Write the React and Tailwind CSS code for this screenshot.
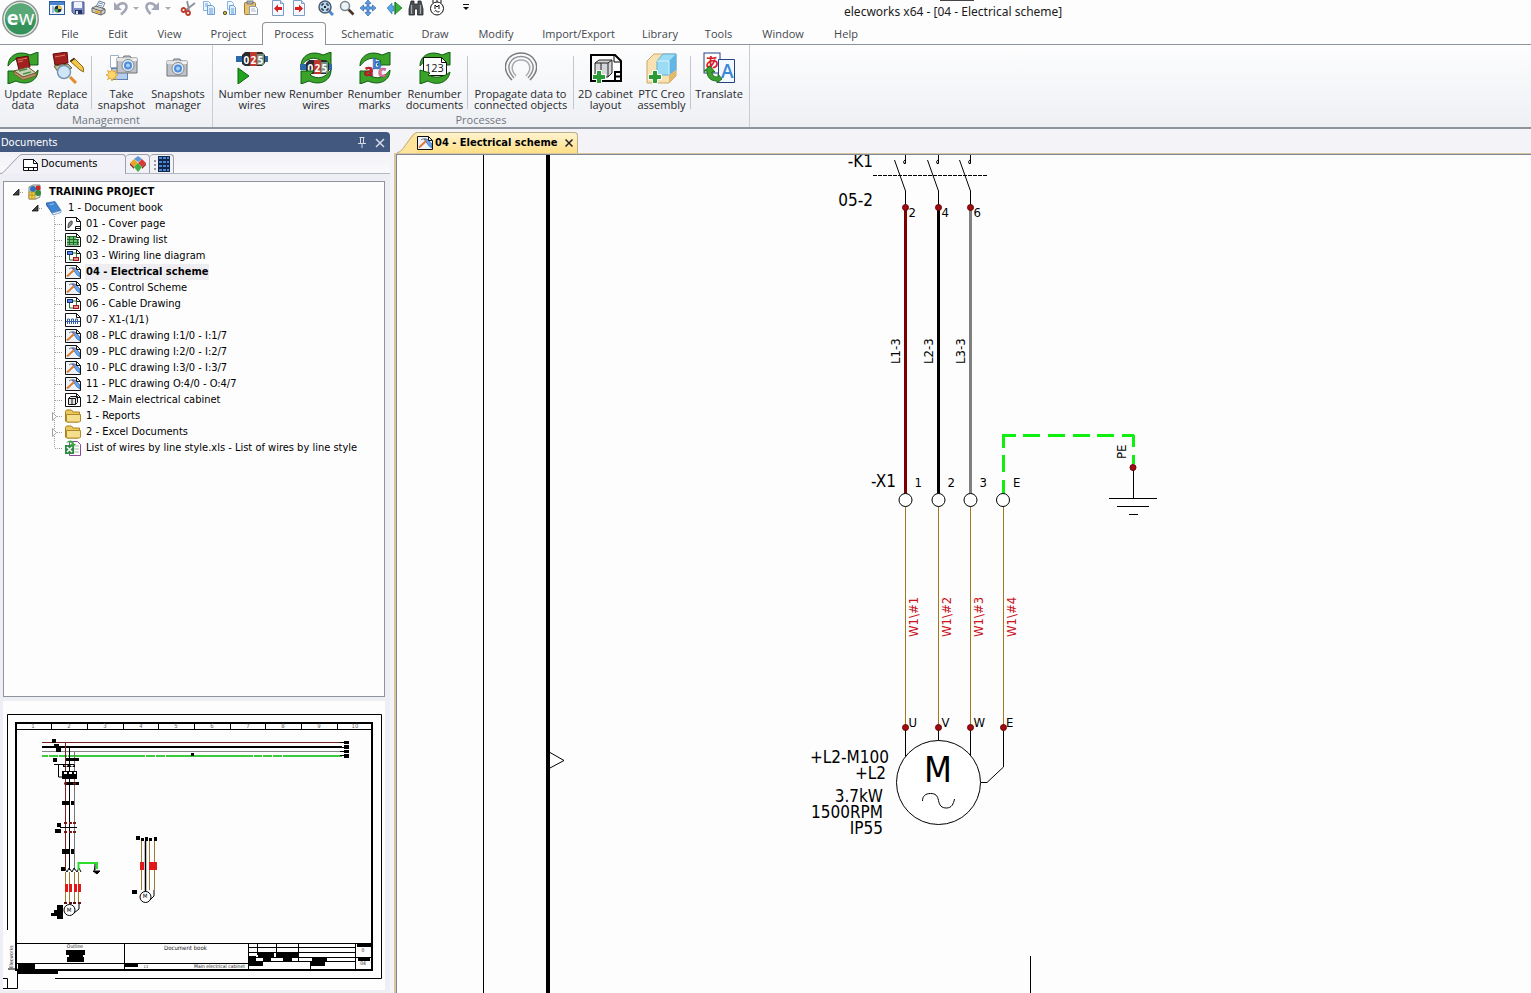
import React from 'react';

/* ---------- quick access icons (16px) ---------- */

const Svg16 = ({ children }) => (
  <svg viewBox="0 0 16 16" className="h-4 w-4 shrink-0" aria-hidden="true">{children}</svg>
);

const HomeIcon = () => (
  <Svg16>
    <rect x="0.5" y="1.5" width="15" height="13" fill="#eef4fc" stroke="#2d5c9e" />
    <rect x="1" y="2" width="14" height="3" fill="#4a84cc" />
    <rect x="3" y="6" width="2" height="7" fill="#9dc0ea" />
    <circle cx="9" cy="9" r="3.5" fill="#1d2f3f" />
    <path d="M9 9V5.5A3.5 3.5 0 0 1 12.5 9z" fill="#f2c43a" />
    <path d="M9 9v3.5A3.5 3.5 0 0 1 5.5 9z" fill="#3fa046" />
  </Svg16>
);
const SaveIcon = () => (
  <Svg16>
    <path d="M2 2h12v12H4l-2-2z" fill="#7e8cc4" stroke="#46588f" />
    <rect x="4" y="2" width="8" height="6" fill="#eef2fa" />
    <rect x="5" y="10" width="7" height="4" fill="#24365f" />
    <rect x="6" y="11" width="2" height="3" fill="#dce4f2" />
  </Svg16>
);
const PrintIcon = () => (
  <Svg16>
    <path d="M5 7l3-6 6 2-3 6z" fill="#fff" stroke="#7a7f88" />
    <path d="M1 8l4-2 9 3v4l-4 2-9-3z" fill="#d0cfc6" stroke="#66686b" />
    <path d="M1 8l9 3v4M10 11l4-2" fill="none" stroke="#66686b" />
    <path d="M4 11l5 2" stroke="#e6a92c" strokeWidth="2" />
    <path d="M8 3l4 1M7 5l4 1" stroke="#5c8dcc" />
  </Svg16>
);
const UndoIcon = () => (
  <Svg16>
    <path d="M4 7C7 2 14 2 13.500 7.500c-.5 3-3 5-5.500 7" fill="none" stroke="#a3a6b6" strokeWidth="2.600" />
    <path d="M1 2v8h8z" fill="#a3a6b6" />
  </Svg16>
);
const RedoIcon = () => (
  <Svg16>
    <path d="M12 7C9 2 2 2 2.500 7.500c.5 3 2 4.500 4 6.500" fill="none" stroke="#a3a6b6" strokeWidth="2.600" />
    <path d="M15 2v8H7z" fill="#a3a6b6" />
  </Svg16>
);
const CutIcon = () => (
  <Svg16>
    <path d="M15 3L6 10M7 1l2 9" stroke="#8c9098" strokeWidth="1.800" />
    <circle cx="3.500" cy="10" r="2" fill="none" stroke="#c03a2b" strokeWidth="1.800" />
    <circle cx="8" cy="13" r="2" fill="none" stroke="#c03a2b" strokeWidth="1.800" />
  </Svg16>
);
const CopyIcon = () => (
  <Svg16>
    <path d="M2.500 1.500h5l2 2v7h-7z" fill="#f1f7ff" stroke="#85b3e3" />
    <path d="M6.500 5.500h5l2 2v7h-7z" fill="#e1eefc" stroke="#6a9fd8" />
    <path d="M8 9h4M8 11h4M8 13h4M4 4h3M4 6h2" stroke="#6a9fd8" />
  </Svg16>
);
const CopySpecialIcon = () => (
  <Svg16>
    <path d="M5.500 1.500h4l2 2v6h-6z" fill="#f1f7ff" stroke="#85b3e3" />
    <path d="M7.500 5.500h4l2 2v7h-6z" fill="#e1eefc" stroke="#6a9fd8" />
    <path d="M9 9h3M9 11h3M9 13h3" stroke="#6a9fd8" />
    <circle cx="3" cy="13" r="1.700" fill="#d4b02c" stroke="#333" strokeWidth=".8" />
  </Svg16>
);
const PasteIcon = () => (
  <Svg16>
    <rect x="1.500" y="2.500" width="11" height="12" rx="1" fill="#e8c372" stroke="#a37a2c" />
    <rect x="4" y="1" width="6" height="3" fill="#a9adb5" stroke="#6a6e76" strokeWidth=".8" />
    <path d="M6.500 6.500h6l2 2v6h-8z" fill="#fff" stroke="#8b9cb5" />
    <path d="M8 9h4M8 11h5" stroke="#a8b6ca" />
  </Svg16>
);
const PageArrowIcon = ({ right }) => (
  <Svg16>
    <path d="M2.500.5h8l3 3v12h-11z" fill="#f6faff" stroke="#7b9dc8" />
    <path d="M10.500.5v3h3" fill="#cddff4" stroke="#7b9dc8" />
    {right
      ? <path d="M12 8.500L8 4.500V7H4v3h4v2.500z" fill="#d81e1e" />
      : <path d="M4 8.500l4-4V7h4v3H8v2.500z" fill="#d81e1e" />}
  </Svg16>
);
const ZoomFitIcon = () => (
  <Svg16>
    <path d="M11 11l4 4" stroke="#4f8ad0" strokeWidth="3" />
    <circle cx="7" cy="7" r="6" fill="#b9d7f2" stroke="#4b5d72" strokeWidth="1.500" />
    <path d="M4 6V4h2M8 4h2v2M10 8v2H8M6 10H4V8" fill="none" stroke="#111" />
    <rect x="6" y="6" width="2" height="2" fill="#222" />
  </Svg16>
);
const ZoomIcon = () => (
  <Svg16>
    <path d="M9.500 9.500l5 5" stroke="#4a3428" strokeWidth="2.600" />
    <circle cx="6" cy="6" r="4.500" fill="#e9f2f7" stroke="#7c848c" strokeWidth="1.500" />
    <path d="M4 5l2-1.500" stroke="#fff" />
  </Svg16>
);
const MoveIcon = () => (
  <Svg16>
    <path d="M8 0l3 3.500H9V7h3.500V5L16 8l-3.500 3V9H9v3.500h2L8 16l-3-3.500h2V9H3.500v2L0 8l3.500-3v2H7V3.500H5z" fill="#5f9fe4" stroke="#2a62aa" strokeWidth=".7" />
  </Svg16>
);
const SyncIcon = () => (
  <Svg16>
    <path d="M0 8l5-5v3h2v5H5v3z" fill="#57a5e0" stroke="#2e72ad" strokeWidth=".6" />
    <path d="M8 2v13M8 2l7 6-7 6z" fill="#35b33c" stroke="#17711d" strokeWidth=".8" />
  </Svg16>
);
const FindIcon = () => (
  <Svg16>
    <path d="M3 1h3v3h4V1h3l2 8v6H9.500V9h-3v6H1V9z" fill="#4c5055" stroke="#232527" strokeWidth=".8" />
    <path d="M3.500 5v9M12.500 5v9" stroke="#a6abb0" strokeWidth="1.200" />
  </Svg16>
);
const MotorIcon = () => (
  <Svg16>
    <circle cx="8" cy="8.500" r="6.500" fill="#fff" stroke="#111" />
    <path d="M4 0v3M8 0v2M12 0v3" stroke="#111" />
    <path d="M6 9V5l2 2 2-2v4M5.500 11.500c1-1.500 2-1 2.500 0s1.500 1 2.500-.5" fill="none" stroke="#111" />
  </Svg16>
);
const Caret = ({ dark }) => (
  <svg viewBox="0 0 8 8" className="h-2 w-2" aria-hidden="true">
    {dark && <path d="M1 .5h6" stroke="#111" />}
    <path d="M1 3h6L4 6z" fill={dark ? '#111' : '#a9abb3'} />
  </svg>
);

const quickAccess = [
  { label: 'Home', icon: <HomeIcon />, box: 'w-[21px]' },
  { label: 'Save', icon: <SaveIcon />, box: 'w-[21px]' },
  { label: 'Print', icon: <PrintIcon />, box: 'w-[22px]' },
  { label: 'Undo', icon: <UndoIcon />, box: 'w-[21px]' },
  { label: 'Undo list', icon: <Caret />, box: 'w-[10px]' },
  { label: 'Redo', icon: <RedoIcon />, box: 'w-[22px]' },
  { label: 'Redo list', icon: <Caret />, box: 'w-[10px]' },
  { label: 'Cut', icon: <CutIcon />, box: 'ml-1 w-[21px]' },
  { label: 'Copy', icon: <CopyIcon />, box: 'w-[21px]' },
  { label: 'Copy special', icon: <CopySpecialIcon />, box: 'w-[21px]' },
  { label: 'Paste', icon: <PasteIcon />, box: 'w-[21px]' },
  { label: 'Previous drawing', icon: <PageArrowIcon />, box: 'ml-1.5 w-[21px]' },
  { label: 'Next drawing', icon: <PageArrowIcon right />, box: 'w-[21px]' },
  { label: 'Zoom extents', icon: <ZoomFitIcon />, box: 'ml-1.5 w-[21px]' },
  { label: 'Zoom', icon: <ZoomIcon />, box: 'w-[21px]' },
  { label: 'Pan', icon: <MoveIcon />, box: 'w-[21px]' },
  { label: 'Refresh', icon: <SyncIcon />, box: 'ml-1.5 w-[21px]' },
  { label: 'Find', icon: <FindIcon />, box: 'w-[21px]' },
  { label: 'Symbol', icon: <MotorIcon />, box: 'w-[21px]' },
  { label: 'Customize', icon: <Caret dark />, box: 'ml-2 w-[21px]' },
];

const menus = [
  { label: 'File', box: 'w-[44px]' },
  { label: 'Edit', box: 'w-[52px]' },
  { label: 'View', box: 'w-[51px]' },
  { label: 'Project', box: 'w-[67px]' },
  { label: 'Process', box: 'w-[64px]', active: true },
  { label: 'Schematic', box: 'w-[83px]' },
  { label: 'Draw', box: 'w-[52px]' },
  { label: 'Modify', box: 'w-[70px]' },
  { label: 'Import/Export', box: 'w-[95px]' },
  { label: 'Library', box: 'w-[68px]' },
  { label: 'Tools', box: 'w-[49px]' },
  { label: 'Window', box: 'w-[80px]' },
  { label: 'Help', box: 'w-[46px]' },
];

/* ---------- ribbon icons (32px) ---------- */

const Svg32 = ({ children }) => (
  <svg viewBox="0 0 32 32" className="h-8 w-8 shrink-0" aria-hidden="true">{children}</svg>
);

const ArrowTop = () => (
  <path d="M1 14C1 3 12-2 23 3l8-3v13H18l4-4C14 4 7 6 1 14z" fill="#3ba32a" stroke="#0f5c12" />
);
const ArrowBottom = () => (
  <path d="M31 18c0 11-11 16-22 11l-8 3V19h13l-4 4c8 5 15 3 21-5z" fill="#3ba32a" stroke="#0f5c12" />
);
const RedBook = () => (
  <>
    <path d="M9 6l12-2 2 11-11 3z" fill="#a32020" stroke="#5c0d0d" />
    <path d="M11 8l9-2M11 10l5-1" stroke="#d87a5c" />
    <path d="M7 19l14-4 8 6-13 4z" fill="#c7d6b8" stroke="#6e5433" />
    <path d="M7 19v3l9 6 13-4v-3l-13 4z" fill="#b69261" stroke="#6e5433" strokeWidth=".8" />
    <path d="M12 19l8-2M16 22l8-2" stroke="#4f8c45" strokeWidth="1.500" />
  </>
);
const UpdateIcon = () => (
  <Svg32><ArrowTop /><ArrowBottom /><RedBook /></Svg32>
);
const ReplaceIcon = () => (
  <Svg32>
    <path d="M1 2l14-2 1 11-13 2z" fill="#a32020" stroke="#5c0d0d" />
    <path d="M3 5l10-2" stroke="#d87a5c" />
    <path d="M2 14l14-2 4 4-14 4z" fill="#b9c9a2" stroke="#6e5433" />
    <path d="M18 9l10 9 4 2-1-5-9-9z" fill="#f3c94a" stroke="#8a6516" />
    <path d="M18 9l4-3 1 1-4 3z" fill="#3a2a22" />
    <path d="M18 25l6 6" stroke="#e48a2a" strokeWidth="3" />
    <circle cx="12" cy="20" r="6.500" fill="#cfe6f9" stroke="#7a97b5" strokeWidth="1.500" />
  </Svg32>
);
const Camera = ({ x, y }) => (
  <g transform={`translate(${x} ${y})`}>
    <path d="M1 3h6l1-2h6l1 2h6v15H1z" fill="#bfc2c6" stroke="#707479" />
    <path d="M1 3h20v3H1z" fill="#e2e4e6" />
    <circle cx="12" cy="10.500" r="6" fill="#e5edf5" stroke="#7f8790" />
    <circle cx="12" cy="10.500" r="4" fill="#4d8edb" />
    <circle cx="12" cy="10.500" r="2" fill="#a9d0f7" />
    <rect x="17" y="4" width="3" height="2" fill="#f3f3f3" />
  </g>
);
const TakeSnapshotIcon = () => (
  <Svg32>
    <path d="M4.500 3.500h8v12h-8z" fill="#fff" stroke="#9eb0c8" />
    <rect x="5.500" y="16.500" width="16" height="11" fill="#b4cdf0" stroke="#5f7fae" />
    <Camera x={10} y={3} />
    <path d="M6 17l1.500 3 3-1.500L9 21.500l3 1.500-3 1.500 1.500 3-3-1.500-1.500 3-1.500-3-3 1.500 1.500-3L0 23l3-1.500-1.500-3 3 1.500z" fill="#ffd86b" stroke="#dd9a2c" strokeWidth=".8" />
  </Svg32>
);
const SnapshotsIcon = () => (
  <Svg32><Camera x={4} y={6} /></Svg32>
);
const Counter = ({ x, y }) => (
  <g transform={`translate(${x} ${y})`}>
    <path d="M-1 4h32v6H-1z" fill="#2b6ba8" />
    <path d="M5 3l3-3h17l3 3v8l-3 3H8l-3-2z" fill="#2b2b2e" />
    <path d="M13 0h7v14h-7z" fill="#c0392f" />
    <path d="M20 2h7v11h-7z" fill="#6f8f80" />
    <text x="6.500" y="12" fill="#fff" className="text-[10px] font-bold">0</text>
    <text x="13.500" y="12" fill="#fff" className="text-[10px] font-bold">2</text>
    <text x="20.500" y="12" fill="#fff" className="text-[10px] font-bold">5</text>
  </g>
);
const NumberNewIcon = () => (
  <Svg32>
    <Counter x={1} y={0} />
    <path d="M2 16l11 8-11 8z" fill="#1fa51f" stroke="#0b640b" />
  </Svg32>
);
const RenumberWiresIcon = () => (
  <Svg32><ArrowTop /><Counter x={1} y={8} /><ArrowBottom /></Svg32>
);
const RenumberMarksIcon = () => (
  <Svg32>
    <ArrowTop /><ArrowBottom />
    <text x="5" y="24" fill="#d3222f" stroke="#8c0f19" strokeWidth=".5" className="text-[16px] font-bold">a</text>
    <text x="13" y="17" fill="#3c86e0" stroke="#1d519a" strokeWidth=".5" className="text-[15px] font-bold">b</text>
    <text x="19" y="25" fill="#e679a8" stroke="#a33a6d" strokeWidth=".5" className="text-[16px] font-bold">c</text>
  </Svg32>
);
const RenumberDocsIcon = () => (
  <Svg32>
    <ArrowTop />
    <path d="M4.500 5.500h18l5 5v13h-23z" fill="#fff" stroke="#111" />
    <path d="M22.500 5.500v5h5" fill="none" stroke="#111" />
    <text x="6" y="20" fill="#111" className="text-[11px]">123</text>
    <path d="M31 20c-2 11-13 14-22 9l-8 3V18l10 3-2 2c8 4 16 2 22-3z" fill="#3ba32a" stroke="#0f5c12" />
  </Svg32>
);
const PropagateIcon = () => (
  <Svg32>
    <path d="M7 28C-7 14 4 1 16 1s23 13 9 27" fill="none" stroke="#77797c" strokeWidth="1.500" />
    <path d="M9 26C-2 14 7 4.500 16 4.500S34 14 23 26" fill="none" stroke="#8d9093" strokeWidth="1.500" />
    <path d="M11 24C3 15 9 8 16 8s13 7 5 16" fill="none" stroke="#a8abad" strokeWidth="1.500" />
  </Svg32>
);
const Plus = () => (
  <path d="M6.500 18.500h5v4h4v5h-4v4h-5v-4h-4v-5h4z" fill="#2c9a35" stroke="#fff" />
);
const CabinetIcon = () => (
  <Svg32>
    <path d="M1 3h24l6 6v20H1z" fill="#fff" stroke="#000" strokeWidth="2" />
    <path d="M24 3v7h7" fill="none" stroke="#000" />
    <path d="M5 11l4-3h13v13l-4 4H5z" fill="#d4d6d9" stroke="#222" />
    <path d="M5 11h13v14M18 11l4-3M11 11v14" fill="none" stroke="#222" />
    <path d="M25 29v-9h6M25 24.500h6" fill="none" stroke="#000" strokeWidth="2" />
    <Plus />
  </Svg32>
);
const CreoIcon = () => (
  <Svg32>
    <path d="M1 9l7-7h22v22l-7 7H1z" fill="#f8e2b4" stroke="#caa765" />
    <path d="M11 9l6-7h13v16l-7 5H11z" fill="#9adcf4" stroke="#5cb0d8" />
    <path d="M23 9l7-7v16l-7 5z" fill="#62b6e6" />
    <path d="M11 9h12v14" fill="none" stroke="#d9f3fc" />
    <path d="M23 23l7-5v6l-7 7z" fill="#e3b96c" />
    <Plus />
  </Svg32>
);
const TranslateIcon = () => (
  <Svg32>
    <rect x="1" y="1" width="16" height="20" fill="#fff" stroke="#26427c" />
    <text x="2" y="15" fill="#d5202a" className="font-['Noto_Sans_CJK_JP',sans-serif] text-[14px] font-bold">あ</text>
    <path d="M15.500 7.500h16v23h-16z" fill="#f4f9ff" stroke="#26427c" />
    <text x="18" y="26" fill="#3a87d8" className="text-[19px] font-semibold">A</text>
    <path d="M1 19l6-5 5 6H9c0 3 2 5 6 5v-3l4 5-5 4v-2C7 29 4 25 4 19z" fill="#39a12d" stroke="#0f5c12" strokeWidth=".8" />
  </Svg32>
);

const management = [
  { label: 'Update data', icon: <UpdateIcon />, box: 'w-[46px]' },
  { label: 'Replace data', icon: <ReplaceIcon />, box: 'w-[43px]' },
  { divider: true },
  { label: 'Take snapshot', icon: <TakeSnapshotIcon />, box: 'w-[55px]' },
  { label: 'Snapshots manager', icon: <SnapshotsIcon />, box: 'w-[58px]' },
];

const processes = [
  { label: 'Number new wires', icon: <NumberNewIcon />, box: 'w-[70px]' },
  { label: 'Renumber wires', icon: <RenumberWiresIcon />, box: 'w-[58px]' },
  { label: 'Renumber marks', icon: <RenumberMarksIcon />, box: 'w-[59px]' },
  { label: 'Renumber documents', icon: <RenumberDocsIcon />, box: 'w-[61px]' },
  { divider: true },
  { label: 'Propagate data to connected objects', icon: <PropagateIcon />, box: 'w-[101px]' },
  { divider: true },
  { label: '2D cabinet layout', icon: <CabinetIcon />, box: 'w-[59px]' },
  { label: 'PTC Creo assembly', icon: <CreoIcon />, box: 'w-[53px]' },
  { divider: true },
  { label: 'Translate', icon: <TranslateIcon />, box: 'w-[52px]' },
];

function RibbonGroup({ title, items, className }) {
  return (
    <section className="flex flex-col border-r border-[#c9ccd2] pt-[7px]">
      <div className={`flex flex-1 ${className}`}>
        {items.map((item, i) =>
          item.divider ? (
            <div key={i} className="mx-0.5 my-1 w-px bg-[#c3c6cc]" />
          ) : (
            <button
              key={i}
              className={`flex flex-col items-center gap-1 text-center text-[11px] leading-[11px] text-[#26282c] ${item.box}`}
            >
              {item.icon}
              {item.label}
            </button>
          )
        )}
      </div>
      <h2 className="text-center text-[11px] leading-[14px] text-[#70757f]">{title}</h2>
    </section>
  );
}

/* ---------- document tree icons ---------- */

const Page = ({ children }) => (
  <Svg16>
    <path d="M.5 1.500h11l4 4v9H.5z" fill="#fff" stroke="#111" />
    <path d="M11.500 1.500v4h4" fill="none" stroke="#111" />
    {children}
  </Svg16>
);
const CoverIcon = () => (
  <Page>
    <path d="M3 12c0-4 1-7 4-7 1 3-1 5-4 7z" fill="#8b8b8b" stroke="#333" strokeWidth=".8" />
    <path d="M10.500 14.500v-4h5M10.500 12.500h5" fill="none" stroke="#111" />
  </Page>
);
const ListIcon = () => (
  <Page>
    <path d="M2 4h9v3h3v6H2z" fill="#6cc072" />
    <path d="M2 4.500h9M2 7.500h12M2 10.500h12M2 13h12M4.500 4v9M8.500 4v9M12.500 7v6" fill="none" stroke="#15551b" strokeWidth=".8" />
  </Page>
);
const WiringIcon = () => (
  <Page>
    <path d="M4.500 6v6h5M7 5h4.500v4" fill="none" stroke="#1d7c2a" />
    <rect x="2.500" y="3.500" width="5" height="3" fill="#5a8bea" stroke="#12307a" />
    <rect x="8.500" y="9.500" width="5" height="3" fill="#f08a8a" stroke="#a31515" />
  </Page>
);
const SchemeIcon = () => (
  <Svg16>
    <path d="M.5 1.500h11l4 4v9H.5z" fill="#eef3fa" />
    <path d="M7 4h3l5 5v4l-3-2z" fill="#6da4e8" stroke="#2f66b4" strokeWidth=".7" />
    <path d="M4 5c1-1.500 5-1.500 6 0" fill="none" stroke="#777" />
    <path d="M2 12.500l7-6.500" stroke="#df7a31" strokeWidth="2" />
    <path d="M.5 1.500h11l4 4v9H.5zM11.500 1.500v4h4" fill="none" stroke="#111" />
  </Svg16>
);
const TerminalIcon = () => (
  <Page>
    <path d="M2.500 12V7h2v5M6.500 12V7h2v5M10.500 12V7h2v5M1 9.500h14" fill="none" stroke="#3560a5" />
  </Page>
);
const BoxIcon = () => (
  <Page>
    <path d="M3.500 6.500l2-2h7v6l-2 2h-7zM3.500 6.500h7v6M10.500 6.500l2-2M7 6.500v6" fill="#e6e6e6" stroke="#111" />
  </Page>
);
const FolderIcon = () => (
  <Svg16>
    <path d="M.5 3.500l1-1.500h5l1.500 2h6.500v9l-1 1H1.500l-1-1z" fill="#e9c85c" stroke="#a9811c" />
    <path d="M1.500 6.500h14V13l-1 1H2.500l-1-1z" fill="#f6df8c" stroke="#b08a28" />
  </Svg16>
);
const ExcelIcon = () => (
  <Svg16>
    <path d="M4.500 1.500h8l3 3v11h-11z" fill="#fff" stroke="#8a4a9c" />
    <path d="M9 6h5M9 9h5M9 12h5" stroke="#a9b9aa" />
    <rect x="0" y="5" width="9" height="9" fill="#2f8a45" />
    <path d="M2 7l5 5M7 7l-5 5" stroke="#fff" strokeWidth="1.500" />
    <path d="M1 3c3-4 8-3 8 1h2L8 7 5 4h2c-1-2-4-2-6-1z" fill="#3aa546" />
  </Svg16>
);
const ProjectIcon = () => (
  <Svg16>
    <path d="M2 3l4-2 7 0v12l-4 2H2z" fill="#dfe7d5" stroke="#555" strokeWidth=".7" />
    <circle cx="6" cy="5" r="3" fill="#2c70c4" />
    <circle cx="11" cy="4" r="2.500" fill="#c52828" />
    <circle cx="11" cy="9" r="3" fill="#2f8a3d" />
    <rect x="2" y="8" width="6" height="7" fill="#f2cf4c" stroke="#a7831b" strokeWidth=".7" />
    <path d="M2 11h6M5 8v7" stroke="#a7831b" strokeWidth=".7" />
  </Svg16>
);
const BookIcon = () => (
  <Svg16>
    <path d="M0 3l9-1.500 6 9L6 13z" fill="#3f86d4" stroke="#2a62a8" strokeWidth=".7" />
    <path d="M6 13l9-2.500v2L7 15z" fill="#e9f1fa" stroke="#5f87b8" strokeWidth=".7" />
    <path d="M0 3v2l7 10-1-2z" fill="#2a62a8" />
    <path d="M4 4.500l4-.7" stroke="#9fc6f0" />
  </Svg16>
);

const treeRows = [
  { text: '01 - Cover page', icon: <CoverIcon /> },
  { text: '02 - Drawing list', icon: <ListIcon /> },
  { text: '03 - Wiring line diagram', icon: <WiringIcon /> },
  { text: '04 - Electrical scheme', icon: <SchemeIcon />, selected: true },
  { text: '05 - Control Scheme', icon: <SchemeIcon /> },
  { text: '06 - Cable Drawing', icon: <WiringIcon /> },
  { text: '07 - X1-(1/1)', icon: <TerminalIcon /> },
  { text: '08 - PLC drawing I:1/0 - I:1/7', icon: <SchemeIcon /> },
  { text: '09 - PLC drawing I:2/0 - I:2/7', icon: <SchemeIcon /> },
  { text: '10 - PLC drawing I:3/0 - I:3/7', icon: <SchemeIcon /> },
  { text: '11 - PLC drawing O:4/0 - O:4/7', icon: <SchemeIcon /> },
  { text: '12 - Main electrical cabinet', icon: <BoxIcon /> },
  { text: '1 - Reports', icon: <FolderIcon />, closed: true },
  { text: '2 - Excel Documents', icon: <FolderIcon />, closed: true },
  { text: 'List of wires by line style.xls - List of wires by line style', icon: <ExcelIcon />, last: true },
];

const Branch = ({ closed, last }) => (
  <svg viewBox="0 0 16 16" className="h-4 w-4 shrink-0" aria-hidden="true">
    <path d={last ? 'M5.500 0v8' : 'M5.500 0v16'} stroke="#a0a0a0" strokeDasharray="1 1" />
    <path d="M6 8.500h8" stroke="#a0a0a0" strokeDasharray="1 1" />
    {closed && <path d="M3.500 4.500v8l4-4z" fill="#fff" stroke="#a0a0a0" />}
  </svg>
);

const OpenMark = () => (
  <svg viewBox="0 0 12 16" className="h-4 w-3 shrink-0" aria-hidden="true">
    <path d="M7 5v6H1z" fill="#404040" stroke="#111" strokeWidth=".8" />
    <path d="M8 8.500h4" stroke="#a0a0a0" strokeDasharray="1 1" />
  </svg>
);

function DocumentTree() {
  return (
    <div className="mt-[7px] mr-[5px] ml-[3px] flex-1 border border-[#8f939c] bg-[#fdfdfe] pt-0.5">
      <ul role="tree" aria-label="Project documents" className="text-[11px] leading-4 whitespace-nowrap text-black">
        <li role="treeitem" className="flex h-4 items-center pl-2">
          <OpenMark />
          <span className="ml-[3px]"><ProjectIcon /></span>
          <span className="ml-1.5 font-bold">TRAINING PROJECT</span>
        </li>
        <li role="treeitem" className="flex h-4 items-center pl-[27px]">
          <OpenMark />
          <span className="ml-[3px]"><BookIcon /></span>
          <span className="ml-1.5">1 - Document book</span>
        </li>
        {treeRows.map((row) => (
          <li
            key={row.text}
            role="treeitem"
            aria-selected={!!row.selected}
            className="flex h-4 items-center pl-[45px]"
          >
            <Branch closed={row.closed} last={row.last} />
            {row.icon}
            <span className={row.selected ? 'ml-1 bg-[#eeedf2] px-px font-bold' : 'ml-1 px-px'}>
              {row.text}
            </span>
          </li>
        ))}
      </ul>
    </div>
  );
}

/* ---------- sheet overview ---------- */

function Overview() {
  const columns = [15, 51, 87, 123, 158, 194, 230, 265, 301, 337, 373];
  return (
    <svg viewBox="3 701 382 289" width="382" height="289" role="img" aria-label="Sheet overview" className="bg-[#fdfdfe] font-['DejaVu_Sans_Condensed','DejaVu_Sans',sans-serif]">
      <g fill="none" stroke="#000">
        <path d="M7.500 930V714.500H381.500V978.500H55M8 969H17.500V988.500H3M3 978.500h4.500v10" />
        <path d="M16 723H372V970H16z" strokeWidth="2" />
        <path d="M16 729.500H372M16 943.500H372M16 963.500H249M124.500 943v27M248.500 943v27M355.500 943v27" />
        <path d="M249 947.500h107M249 952.500h107M249 957.500h123M249 961.500h107M257.500 943v12M276.500 943v12M298.500 943v19M310.500 961v9" />
        {columns.slice(1, 10).map((x) => <path key={x} d={`M${x + 0.5} 724v6`} />)}
      </g>
      <g fill="#666" textAnchor="middle" className="text-[6px]">
        {columns.slice(0, 10).map((x, i) => <text key={x} x={x + 18} y="728">{i + 1}</text>)}
      </g>

      {/* supply bars */}
      <path d="M42 742.500H342" stroke="#7a1f1f" />
      <path d="M42 747H342" stroke="#000" strokeWidth="2" />
      <path d="M42 751.500H342" stroke="#888" />
      <path d="M42 756H342" stroke="#3ccb3c" strokeWidth="2" />
      <path d="M48 756h1M58 756h1M67 756h1M145 756h1M155 756h1M165 756h1M253 756h1M262 756h1M272 756h1M282 756h1" stroke="#fff" strokeWidth="2" />
      <path d="M340 742.500h5M340 747.500h5M340 751.500h5M340 755.500h5" stroke="#000" />
      <path d="M344 741h5v3h-5zM344 745h5v4h-5zM344 750h5v3h-5zM344 754h5v4h-5zM191 753h3v3h-3zM52 739h4v4h-4zM54 744h5v2h-5zM56 748h5v4h-5zM53 758h4v4h-4z" fill="#000" />

      {/* starter circuit */}
      <path d="M65.500 743V870" stroke="#7a1f1f" />
      <path d="M69.500 747V870" stroke="#000" />
      <path d="M74.500 752V870" stroke="#777" />
      <path d="M54 764.500h20M58.500 764v13h4M60 827.500h17" fill="none" stroke="#000" />
      <path d="M66 758h13v3H66zM63 764l3 3 3-3 3 3 3-3v3H63zM62 771h15v8H62zM65 782h14v3H65zM62 801h8v4h-8zM71 801h3v4h-3zM57 823h4v4h-4zM55 829h6v4h-6zM62 849h8v5h-8zM71 849h3v5h-3zM61 867h4v4h-4z" fill="#000" />
      <path d="M64 773h3M69 773h3M74 773h2" stroke="#fff" strokeWidth="2" />
      <path d="M64 823h3M69 823h3M73 823h3M64 832h3M69 832h3M73 832h3M64 783.500h3M73 783.500h3" stroke="#7c1616" strokeWidth="2" />
      <path d="M64 868l3 4 2-4 3 4 2-4 3 4 2-4 2 4" fill="none" stroke="#000" />
      <path d="M65.500 872v31M69.500 872v31M74.500 872v31M78.500 872v31" stroke="#9c7a2e" />
      <path d="M65 884h3v8h-3zM69 884h3v8h-3zM74 884h3v8h-3zM78 884h3v8h-3z" fill="#e21818" />
      <path d="M64 903h3M69 903h3M73 903h3M78 903h3" stroke="#5c1010" strokeWidth="2" />
      <path d="M78.500 870v-7H97v6" fill="none" stroke="#2fdd2f" strokeWidth="2" />
      <path d="M95 864v6h-1M93 871h7l-3 3z" fill="#000" stroke="#000" />
      <circle cx="69.500" cy="910" r="5.500" fill="#fff" stroke="#000" />
      <text x="69" y="912" textAnchor="middle" className="text-[6px]">M</text>
      <path d="M74 913l5-4v-5" fill="none" stroke="#000" />
      <path d="M57 905h6v14h-6v-3h-6v-3h3v-3h3z" fill="#000" />

      {/* second motor */}
      <path d="M141.500 841v49M149.500 841v49M154.500 841v49" stroke="#9c7a2e" />
      <path d="M145.500 841v52" stroke="#000" strokeWidth="1.500" />
      <path d="M136 836h4v4h-4zM141 838h3v3h-3zM145 837h3v4h-3zM149 838h3v3h-3zM154 837h3v4h-3zM132 890h5v4h-5z" fill="#000" />
      <path d="M140 862h4v8h-4zM149 862h4v8h-4zM153 862h4v8h-4z" fill="#e21818" />
      <circle cx="145.500" cy="897" r="5.500" fill="#fff" stroke="#000" />
      <text x="145" y="898" textAnchor="middle" className="text-[6px]">M</text>
      <path d="M150 900l4-4v-6" fill="none" stroke="#000" />

      {/* title block */}
      <path d="M66 950h19v5h-2v2h1v5H67v-5h2v-2h-3zM18 963h17v7H18zM18 970h40v4H18zM125 964h13v3h-13zM249 956h7v6h-7zM249 961h14v5h-14zM258 953h16v4h-16zM276 953h22v4h-22zM263 957h8v4h-8zM283 957h9v4h-9zM312 957h15v4h-15zM310 961h15v5h-15zM357 944h14v3h-14zM358 957h12v4h-12z" fill="#000" />
      <g fill="#222">
        <text x="75" y="948" textAnchor="middle" className="text-[5px]">Outline</text>
        <text x="164" y="950" className="text-[6px]">Document book</text>
        <text x="144" y="968" className="text-[4px]">L1</text>
        <text x="245" y="968" textAnchor="end" className="text-[5px]">Main electrical cabinet</text>
        <text x="363" y="952" textAnchor="middle" className="text-[5px]">0</text>
        <text x="363" y="965" textAnchor="middle" className="text-[5px]">04</text>
        <text transform="translate(13 968) rotate(-90)" className="text-[5px]">Elecworks</text>
      </g>
    </svg>
  );
}

/* ---------- main drawing ---------- */

const poles = [
  { x: 905.5, wire: '#7b0000', name: 'L1-3', out: '2', term: '1', cable: 'W1\\#1', pin: 'U' },
  { x: 938.5, wire: '#000000', name: 'L2-3', out: '4', term: '2', cable: 'W1\\#2', pin: 'V' },
  { x: 970.5, wire: '#808080', name: 'L3-3', out: '6', term: '3', cable: 'W1\\#3', pin: 'W' },
];

const Dot = ({ x, y }) => <circle cx={x} cy={y} r="3" fill="#a00c12" stroke="#6a0508" />;

function Drawing() {
  return (
    <svg
      viewBox="397 155 1134 838"
      width="1134"
      height="838"
      role="img"
      aria-label="Electrical scheme"
      className="shrink-0 font-['DejaVu_Sans_Condensed','DejaVu_Sans',sans-serif]"
    >
      {/* sheet frame */}
      <path d="M483.500 155V993M1030.500 956V993" stroke="#000" />
      <path d="M548 155V993" stroke="#000" strokeWidth="4" />
      <path d="M550 752.500l14 8-14 7.500" fill="none" stroke="#000" />

      {/* contactor */}
      <path d="M873 175.500H988" stroke="#000" strokeDasharray="4 1" />
      {poles.map((p) => (
        <g key={p.name}>
          <path d={`M${p.x - 11} 160L${p.x} 191V207`} fill="none" stroke="#000" />
          <path d={`M${p.x} 155v8.500h-1.500q-1.500-2.500 1.500-4`} fill="none" stroke="#000" />
          <path d={`M${p.x} 207V494`} stroke={p.wire} strokeWidth="3" />
          <path d={`M${p.x} 506V727`} stroke="#a07820" />
          <Dot x={p.x} y={207.5} />
          <circle cx={p.x} cy="500" r="6.500" fill="#fff" stroke="#000" />
          <text x={p.x + 3} y="217" className="text-[13px]">{p.out}</text>
          <text x={p.x + 9} y="487" className="text-[13px]">{p.term}</text>
          <text transform={`translate(${p.x - 6} 364) rotate(-90)`} className="text-[13px]">{p.name}</text>
          <text transform={`translate(${p.x + 12} 637) rotate(-90)`} fill="#c8141c" className="text-[13px]">{p.cable}</text>
        </g>
      ))}

      {/* earth conductor */}
      <path d="M1003.500 494V434.500" stroke="#10f010" strokeWidth="3" strokeDasharray="14 8 17 7 14" />
      <path d="M1002 435.500H1134" stroke="#10f010" strokeWidth="3" strokeDasharray="14 7 17 8 17 8 17 7 17 8 14" />
      <path d="M1133.500 435V464" stroke="#10f010" strokeWidth="3" strokeDasharray="12 8 10" />
      <path d="M1003.500 727V767L987 782.500h-6" fill="none" stroke="#000" />
      <path d="M1003.500 506V727" stroke="#a07820" />
      <circle cx="1003" cy="500" r="6.500" fill="#fff" stroke="#000" />
      <path d="M1133.500 467V498M1109 498.500h48M1117 506.500h32M1129 514.500h9" stroke="#000" />
      <Dot x={1133} y={467.5} />
      <text x="1013" y="487" className="text-[13px]">E</text>
      <text transform="translate(1126 459) rotate(-90)" className="text-[13px]">PE</text>
      <text transform="translate(1016 637) rotate(-90)" fill="#c8141c" className="text-[13px]">W1\#4</text>

      {/* motor */}
      <path d="M905.500 727V757M938.500 727V741M970.500 727V757" stroke="#000" />
      <circle cx="938.500" cy="782.500" r="42" fill="#fff" stroke="#000" />
      {poles.map((p) => (
        <g key={p.pin}>
          <Dot x={p.x} y={727.5} />
          <text x={p.x + 3} y="727" className="text-[13px]">{p.pin}</text>
        </g>
      ))}
      <Dot x={1003.5} y={727.5} />
      <text x="1006" y="727" className="text-[13px]">E</text>
      <text x="938" y="782" textAnchor="middle" className="text-[36px]">M</text>
      <path d="M922.500 801c0-5 3-7.500 8-7.500s7 2 8 7 3 7.500 8 7.500 7-4 8-9" fill="none" stroke="#000" />

      <g className="text-[17px]" textAnchor="end">
        <text x="873" y="167">-K1</text>
        <text x="873" y="206">05-2</text>
        <text x="896" y="487">-X1</text>
        <text x="889" y="763">+L2-M100</text>
        <text x="886" y="779">+L2</text>
        <text x="883" y="802">3.7kW</text>
        <text x="883" y="818">1500RPM</text>
        <text x="883" y="834">IP55</text>
      </g>
    </svg>
  );
}

/* ---------- page ---------- */

export default function App() {
  return (
    <div className="flex min-h-screen flex-col overflow-hidden bg-[#f4f4f8] font-['Open_Sans',sans-serif]">

      {/* Title bar and menu */}
      <header className="flex h-[45px] border-b border-[#8e949c] bg-[#fdfdfe]">
        <button aria-label="elecworks menu" className="h-10 w-[46px] shrink-0 pl-px">
          <svg viewBox="0 0 40 40" className="h-10 w-10" aria-hidden="true">
            <circle cx="19.500" cy="19" r="18.500" fill="#8d9692" />
            <circle cx="19.500" cy="19" r="17" fill="#e3e8e5" />
            <circle cx="19.500" cy="19" r="15.500" fill="#35915a" />
            <path d="M4 19a15.500 15.500 0 0 1 31 0c-8 4-22 5-31 0z" fill="#5aa878" />
            <text x="19.500" y="25" fill="#fff" textAnchor="middle" className="text-[20px]">
              <tspan className="font-bold">e</tspan>w
            </text>
          </svg>
        </button>
        <div className="flex flex-1 flex-col">
          <div className="flex h-[23px]">
            <div className="flex h-4 items-center">
              {quickAccess.map((q) => (
                <button key={q.label} aria-label={q.label} className={`flex shrink-0 justify-center ${q.box}`}>
                  {q.icon}
                </button>
              ))}
            </div>
            <h1 className="relative ml-[368px] font-['Noto_Sans',sans-serif] text-[12px] leading-[23px] whitespace-nowrap text-[#1b1b1b]">
              elecworks x64 - [04 - Electrical scheme]
              <span className="absolute top-0 left-24 h-px w-[34px] bg-[#444]" />
            </h1>
          </div>
          <nav className="ml-0.5 flex h-[22px] text-[11px] text-[#44474d]">
            {menus.map((m) => (
              <button
                key={m.label}
                className={
                  m.active
                    ? `-mt-px -mb-px shrink-0 rounded-t-sm border border-b-0 border-[#8e949c] bg-[#fdfdfe] ${m.box}`
                    : `shrink-0 pt-0.5 ${m.box}`
                }
              >
                {m.label}
              </button>
            ))}
          </nav>
        </div>
      </header>

      {/* Ribbon */}
      <div className="flex h-[84px] border-b-2 border-[#8e949c] bg-linear-to-b from-[#fdfdfe] to-[#eef0f4]">
        <RibbonGroup title="Management" items={management} className="pr-[5px]" />
        <RibbonGroup title="Processes" items={processes} className="px-1" />
      </div>

      <div className="flex flex-1 pt-[3px]">

        {/* Documents panel */}
        <aside className="flex w-[390px] shrink-0 flex-col bg-[#eeeef5] font-['DejaVu_Sans_Condensed','DejaVu_Sans',sans-serif]">
          <div className="flex h-[20px] items-center rounded-tr-sm bg-[#42587f] pt-0.5 pr-px pl-px text-[11px] text-white">
            <h2 className="flex-1">Documents</h2>
            <button aria-label="Pin" className="px-1">
              <svg viewBox="0 0 10 12" className="h-3 w-[10px]" fill="none" stroke="#d5dbe6" aria-hidden="true">
                <path d="M2.500.5h5M3.500 1v5M6.500 1v5M1 6.500h8M5 7v4" />
              </svg>
            </button>
            <button aria-label="Close panel" className="px-1">
              <svg viewBox="0 0 10 10" className="h-[10px] w-[10px]" stroke="#d5dbe6" strokeWidth="1.500" aria-hidden="true">
                <path d="M1 1l8 8M9 1l-8 8" />
              </svg>
            </button>
          </div>

          <div role="tablist" className="flex h-[22px] border-b border-[#b4b7bf] bg-linear-to-b from-[#f0f0f6] to-[#fbfbfd] pt-0.5 text-[11px]">
            <svg viewBox="0 0 22 20" className="-mb-px h-5 w-[22px] shrink-0" aria-hidden="true">
              <path d="M0 19.500c8 0 10-19 22-19V20H0z" fill="#f1f1f7" />
              <path d="M0 19.500c3 0 4-2 6-4L18 3q2-2.500 4-2.500" fill="none" stroke="#9da1aa" />
            </svg>
            <button role="tab" aria-selected="true" className="-mb-px flex w-[104px] items-center gap-px rounded-tr-sm border-t border-r border-[#9da1aa] bg-[#f1f1f7]">
              <svg viewBox="0 0 18 16" className="h-4 w-[18px]" aria-hidden="true">
                <path d="M1.500 2.500h10l4 4v7h-14z" fill="#fff" stroke="#111" />
                <path d="M11.500 2.500v4h4M1.500 10.500h14M6.500 10.500v3M11.500 10.500v3" fill="none" stroke="#111" />
              </svg>
              Documents
            </button>
            <button role="tab" aria-selected="false" aria-label="Components" className="flex w-6 items-center justify-center rounded-t-sm border-t border-r border-[#9da1aa] bg-[#f1f1f7]">
              <svg viewBox="0 0 16 16" className="h-4 w-4" aria-hidden="true">
                <path d="M8 0l4 3-4 3-4-3z" fill="#5b97dc" />
                <path d="M4 3l4 4-4 4-4-4z" fill="#e9a527" />
                <path d="M12 3l4 4-4 4-4-4z" fill="#d93a34" />
                <path d="M8 7l4 4-4 5-4-5z" fill="#3eae43" />
                <path d="M0 7l4 4v2l-4-4zM16 7l-4 4v2l4-4z" fill="#8c2b22" />
              </svg>
            </button>
            <button role="tab" aria-selected="false" aria-label="Table" className="flex w-6 items-center justify-center rounded-t-sm border-t border-r border-[#9da1aa] bg-[#f1f1f7]">
              <svg viewBox="0 0 17 16" className="h-4 w-[17px]" aria-hidden="true">
                <path d="M1 4h2v2H1zM1 8h2v2H1zM1 12h2v2H1z" fill="#999" />
                <rect x="5" y="0" width="12" height="16" fill="#10264a" />
                <path d="M6 1h3v2H6zM10 1h3v2h-3zM14 1h2v2h-2zM6 5h3v2H6zM10 5h3v2h-3zM14 5h2v2h-2zM6 9h3v2H6zM10 9h3v2h-3zM14 9h2v2h-2zM6 13h3v2H6zM10 13h3v2h-3zM14 13h2v2h-2z" fill="#4d86cf" />
              </svg>
            </button>
          </div>

          <DocumentTree />

          <div className="px-[3px] pt-1 pb-[3px]">
            <Overview />
          </div>
        </aside>

        {/* Drawing area */}
        <main className="ml-1 flex min-w-0 flex-1 flex-col font-['DejaVu_Sans_Condensed','DejaVu_Sans',sans-serif]">
          <div className="flex h-[21px] pl-[3px]">
            <svg viewBox="0 0 20 21" className="h-[21px] w-5 shrink-0" aria-hidden="true">
              <path d="M0 21C8 19 12 .5 20 .5V21z" fill="#ffe59a" />
              <path d="M0 20.500c3 0 4-2 6-4L16 3q2-2.500 4-2.500" fill="none" stroke="#b9ad8a" />
            </svg>
            <button className="flex w-[143px] items-center gap-0.5 border-t border-[#b9ad8a] bg-linear-to-b from-[#fff4cf] to-[#ffdf84] text-[11px] font-bold whitespace-nowrap">
              <SchemeIcon />
              04 - Electrical scheme
            </button>
            <button aria-label="Close drawing" className="flex w-[18px] items-center rounded-tr-sm border-t border-r border-[#b9ad8a] bg-linear-to-b from-[#fff4cf] to-[#ffdf84] pl-[5px]">
              <svg viewBox="0 0 8 8" className="h-2 w-2" stroke="#222" strokeWidth="1.500" aria-hidden="true">
                <path d="M.5.5l7 7M7.500.5l-7 7" />
              </svg>
            </button>
          </div>
          <div className="flex-1 border-t border-l-2 border-[#d8c79c]">
            <div className="flex h-full overflow-hidden border-t border-l border-[#7f8794] bg-[#fdfdfe]">
              <Drawing />
            </div>
          </div>
        </main>
      </div>
    </div>
  );
}
